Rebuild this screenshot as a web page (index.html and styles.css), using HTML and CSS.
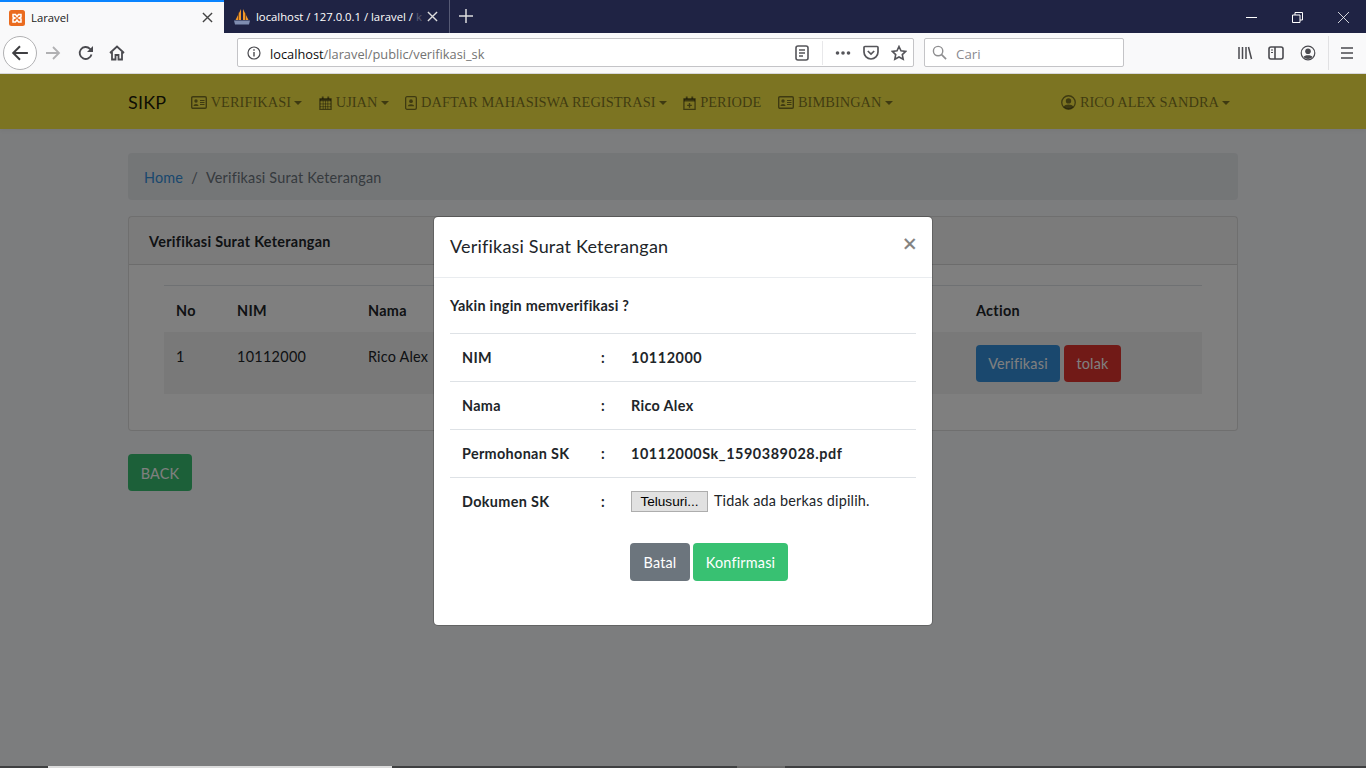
FILE: index.html
```html
<!DOCTYPE html>
<html lang="en">

<head>
    <meta charset="UTF-8">
    <meta name="viewport" content="width=device-width, initial-scale=1.0">
    <title>Laravel</title>
    <link rel="stylesheet" href="styles.css">
</head>

<body>

    <div class="tabbar">
        <div class="tab tab-active">
            <svg class="favicon" viewBox="0 0 16 16"><rect width="16" height="16" rx="2.5" fill="#ea6b1f"/><path d="M4 4.500h2.500L8 6.500l1.500-2H12v2.500l-2 1 2 1V12H9.500L8 10l-1.500 2H4V9l2-1-2-1z" fill="none" stroke="#fff" stroke-width="1.500"/></svg>
            <span class="tab-title">Laravel</span>
            <svg class="tab-close" viewBox="0 0 12 12"><path d="M1 1l10 10M11 1L1 11" stroke="#444" stroke-width="1.500"/></svg>
        </div>
        <div class="tab tab-other">
            <svg class="favicon" viewBox="0 0 16 16"><path d="M7 0L1.500 11H7zM9 0l5.500 11H9z" fill="#f0982a"/><path d="M4.500 3.500V11M11.500 4v7" stroke="#6b3c18" stroke-width=".8"/><path d="M0 11.500h16l-1 4H1z" fill="#7f8db0"/></svg>
            <span class="tab-title">localhost / 127.0.0.1 / laravel / <span class="tab-fade">k</span></span>
            <svg class="tab-close" viewBox="0 0 12 12"><path d="M1 1l10 10M11 1L1 11" stroke="#ddd" stroke-width="1.500"/></svg>
        </div>
        <svg class="new-tab" viewBox="0 0 14 14"><path d="M7 0v14M0 7h14" stroke="#ddd" stroke-width="1.500"/></svg>
        <div class="window-btns">
            <svg viewBox="0 0 11 11"><path d="M0 5.500h11" stroke="#fff"/></svg>
            <svg viewBox="0 0 11 11"><path d="M.5 3h7.500v7.500H.5zM3 3V.5h7.500V8H8" fill="none" stroke="#fff"/></svg>
            <svg viewBox="0 0 11 11"><path d="M0 0l11 11M11 0L0 11" stroke="#fff" stroke-width=".8"/></svg>
        </div>
    </div>

    <div class="toolbar">
        <div class="back-btn">
            <svg viewBox="0 0 16 16"><path d="M15 8H2M8 2L2 8l6 6" fill="none" stroke="#3f3f42" stroke-width="1.800"/></svg>
        </div>
        <svg class="tool-icon forward" viewBox="0 0 16 16"><path d="M1 8h13M8 2l6 6-6 6" fill="none" stroke="#b1b1b3" stroke-width="1.800"/></svg>
        <svg class="tool-icon reload" viewBox="0 0 16 16"><path d="M13.500 9.500A6 6 0 1 1 12 3.800L14 6" fill="none" stroke="#4a4a4f" stroke-width="1.800"/><path d="M15 1v6H9z" fill="#4a4a4f"/></svg>
        <svg class="tool-icon home" viewBox="0 0 16 16"><path d="M1 8l7-6.500L15 8M3 7v7.500h3.500V10h3v4.500H13V7" fill="none" stroke="#4a4a4f" stroke-width="1.800"/></svg>

        <div class="urlbar">
            <svg class="info" viewBox="0 0 14 14"><circle cx="7" cy="7" r="6" fill="none" stroke="#4a4a4f" stroke-width="1.200"/><path d="M7 6v4.500M7 3.200v1.500" stroke="#4a4a4f" stroke-width="1.400"/></svg>
            <span class="url"><span class="url-host">localhost</span>/laravel/public/verifikasi_sk</span>
            <svg class="reader" viewBox="0 0 14 16"><rect x="1" y="1" width="12" height="14" rx="2" fill="none" stroke="#55555a" stroke-width="1.600"/><path d="M4 5h6M4 8h6M4 11h4" stroke="#55555a" stroke-width="1.300"/></svg>
            <span class="url-sep"></span>
            <svg class="dots" viewBox="0 0 16 4"><circle cx="2.500" cy="2" r="1.800" fill="#55555a"/><circle cx="8" cy="2" r="1.800" fill="#55555a"/><circle cx="13.500" cy="2" r="1.800" fill="#55555a"/></svg>
            <svg class="pocket" viewBox="0 0 16 16"><path d="M2 1.500h12a1 1 0 0 1 1 1V7a7 7 0 0 1-14 0V2.500a1 1 0 0 1 1-1z" fill="none" stroke="#55555a" stroke-width="1.700"/><path d="M4.800 6L8 9l3.200-3" fill="none" stroke="#55555a" stroke-width="1.700"/></svg>
            <svg class="star" viewBox="0 0 16 16"><path d="M8 1.500l2 4.300 4.700.6-3.400 3.200.9 4.700L8 12l-4.200 2.300.9-4.700L1.300 6.400 6 5.800z" fill="none" stroke="#55555a" stroke-width="1.600"/></svg>
        </div>

        <div class="searchbar">
            <svg viewBox="0 0 16 16"><circle cx="6.500" cy="6.500" r="5" fill="none" stroke="#8e8e90" stroke-width="1.500"/><path d="M10 10l5 5" stroke="#8e8e90" stroke-width="1.800"/></svg>
            <span class="search-text">Cari</span>
        </div>

        <div class="tool-right">
            <svg class="library" viewBox="0 0 16 16"><path d="M2 2v12M5.500 2v12M9 2v12M11.500 2l3 12" stroke="#4a4a4f" stroke-width="1.500"/></svg>
            <svg class="sidebar" viewBox="0 0 16 16"><rect x="1" y="2" width="14" height="12" rx="2" fill="none" stroke="#4a4a4f" stroke-width="1.600"/><path d="M7 2v12" stroke="#4a4a4f" stroke-width="1.600"/><path d="M3 5h2M3 7.500h2" stroke="#4a4a4f"/></svg>
            <svg class="account" viewBox="0 0 16 16"><circle cx="8" cy="8" r="6.800" fill="none" stroke="#4a4a4f" stroke-width="1.200"/><circle cx="8" cy="6.300" r="2.800" fill="#4a4a4f"/><path d="M3.500 12c1-2.500 8-2.500 9 0-2 2.500-7 2.500-9 0z" fill="#4a4a4f"/></svg>
            <span class="tool-sep"></span>
            <svg class="menu" viewBox="0 0 12 12"><path d="M0 1h12M0 6h12M0 11h12" stroke="#4a4a4f" stroke-width="1.500"/></svg>
        </div>
    </div>

    <div class="page">
        <nav class="navbar">
            <div class="container nav-inner">
                <span class="brand">SIKP</span>
                <a class="nav-link">
                    <svg class="ic ic-card" viewBox="0 0 16 13"><use href="#card"/></svg>VERIFIKASI<i class="caret"></i>
                </a>
                <a class="nav-link">
                    <svg class="ic ic-cal" viewBox="0 0 14 15"><use href="#calendar"/></svg>UJIAN<i class="caret"></i>
                </a>
                <a class="nav-link">
                    <svg class="ic ic-port" viewBox="0 0 13 15"><rect x=".7" y=".7" width="11.600" height="13.600" rx="1.500" fill="none" stroke="currentColor" stroke-width="1.400"/><circle cx="6.500" cy="5.500" r="2" fill="currentColor"/><path d="M3 11c0-3 7-3 7 0z" fill="currentColor"/></svg>DAFTAR MAHASISWA REGISTRASI<i class="caret"></i>
                </a>
                <a class="nav-link">
                    <svg class="ic ic-cal" viewBox="0 0 14 15"><path d="M1 3h12v11.300H1z" fill="none" stroke="currentColor" stroke-width="1.400"/><path d="M1 3h12v3H1zM3 .5h2V3H3zM9 .5h2V3H9z" fill="currentColor"/><path d="M7 7.500v5M4.500 10h5" stroke="currentColor" stroke-width="1.500"/></svg>PERIODE
                </a>
                <a class="nav-link">
                    <svg class="ic ic-card" viewBox="0 0 16 13"><use href="#card"/></svg>BIMBINGAN<i class="caret"></i>
                </a>
                <a class="nav-link nav-user">
                    <svg class="ic ic-user" viewBox="0 0 14 14"><circle cx="7" cy="7" r="6.300" fill="none" stroke="currentColor" stroke-width="1.200"/><circle cx="7" cy="5.500" r="2.500" fill="currentColor"/><path d="M2.500 11c1-3 8-3 9 0-2 2.800-7 2.800-9 0z" fill="currentColor"/></svg>RICO ALEX SANDRA<i class="caret"></i>
                </a>
            </div>
        </nav>

        <main class="container content">
            <div class="breadcrumb">
                <a class="crumb-link">Home</a>
                <span class="crumb-sep">/</span>
                <span class="crumb-now">Verifikasi Surat Keterangan</span>
            </div>

            <div class="card">
                <div class="card-header">Verifikasi Surat Keterangan</div>
                <div class="card-body">
                    <table class="list-table">
                        <thead>
                            <tr>
                                <th class="col-no">No</th>
                                <th class="col-nim">NIM</th>
                                <th class="col-nama">Nama</th>
                                <th>Action</th>
                            </tr>
                        </thead>
                        <tbody>
                            <tr>
                                <td>1</td>
                                <td class="num">10112000</td>
                                <td>Rico Alex</td>
                                <td class="col-action">
                                    <button class="btn btn-blue">Verifikasi</button>
                                    <button class="btn btn-red">tolak</button>
                                </td>
                            </tr>
                        </tbody>
                    </table>
                </div>
            </div>

            <button class="btn btn-back">BACK</button>
        </main>

        <div class="backdrop">
            <div class="modal">
                <div class="modal-header">
                    <h5 class="modal-title">Verifikasi Surat Keterangan</h5>
                    <span class="modal-close">&times;</span>
                </div>
                <div class="modal-body">
                    <p class="modal-question">Yakin ingin memverifikasi ?</p>
                    <table class="detail-table">
                        <tr>
                            <th class="detail-label">NIM</th>
                            <th class="detail-colon">:</th>
                            <th class="detail-num">10112000</th>
                        </tr>
                        <tr>
                            <th class="detail-label">Nama</th>
                            <th class="detail-colon">:</th>
                            <th>Rico Alex</th>
                        </tr>
                        <tr>
                            <th class="detail-label">Permohonan SK</th>
                            <th class="detail-colon">:</th>
                            <th class="detail-num">10112000Sk_1590389028.pdf</th>
                        </tr>
                        <tr>
                            <th class="detail-label">Dokumen SK</th>
                            <th class="detail-colon">:</th>
                            <td class="file-cell">
                                <span class="file-btn">Telusuri...</span>
                                <span class="file-name">Tidak ada berkas dipilih.</span>
                            </td>
                        </tr>
                    </table>
                    <div class="modal-actions">
                        <button class="btn btn-grey">Batal</button>
                        <button class="btn btn-green">Konfirmasi</button>
                    </div>
                </div>
            </div>
        </div>
    </div>

    <div class="bottom-strip">
        <span class="strip-light"></span>
        <span class="strip-mid"></span>
    </div>

    <svg class="defs" width="0" height="0">
        <symbol id="card" viewBox="0 0 16 13">
            <rect x=".7" y=".7" width="14.600" height="11.600" rx="1.200" fill="none" stroke="currentColor" stroke-width="1.400"/>
            <circle cx="5" cy="5" r="1.700" fill="currentColor"/>
            <path d="M2.500 10c0-2.800 5-2.800 5 0z" fill="currentColor"/>
            <path d="M9 4.500h4.500M9 6.500h4.500M9 8.500h4.500" stroke="currentColor"/>
        </symbol>
        <symbol id="calendar" viewBox="0 0 14 15">
            <path d="M1 3h12v11.300H1z" fill="none" stroke="currentColor" stroke-width="1.400"/>
            <path d="M1 3h12v2.500H1zM3 .5h2V3H3zM9 .5h2V3H9z" fill="currentColor"/>
            <path d="M1 8.500h12M1 11.500h12M4.500 5v9M7 5v9M9.500 5v9" stroke="currentColor" stroke-width=".8"/>
        </symbol>
    </svg>

</body>

</html>
```

FILE: styles.css
```css
* {
    box-sizing: border-box;
}

body {
    margin: 0;
    height: 768px;
    overflow: hidden;
    display: flex;
    flex-direction: column;
    background: #f8fafc;
    font-family: Lato, "Open Sans", sans-serif;
    font-size: 14.4px;
    color: #212529;
}

/* browser chrome */
.tabbar {
    height: 33px;
    flex: none;
    display: flex;
    background: #1f2344;
    font-family: "Open Sans", sans-serif;
    font-size: 11.3px;
}

.tab {
    display: flex;
    align-items: center;
    width: 224px;
    padding-left: 9px;
    padding-right: 11px;
}

.tab-active {
    background: #f9f9fa;
    border-top: 2px solid #0a84ff;
    color: #18191a;
}

.tab-other {
    width: 226px;
    padding-left: 10px;
    padding-right: 11px;
    color: #fff;
    border-right: 1px solid #565a75;
}

.favicon {
    width: 16px;
    height: 16px;
    flex: none;
}

.tab-title {
    margin-left: 6px;
    flex: 1;
    white-space: nowrap;
}

.tab-fade {
    opacity: .25;
}

.tab-close {
    width: 11px;
    height: 11px;
    flex: none;
}

.new-tab {
    width: 14px;
    height: 14px;
    margin: 9px 0 0 9px;
}

.window-btns {
    margin-left: auto;
    display: flex;
    gap: 35px;
    padding: 12px 17px 0 0;
}

.window-btns svg {
    width: 11px;
    height: 11px;
}

.toolbar {
    height: 41px;
    flex: none;
    display: flex;
    align-items: center;
    background: #f9f9fa;
    border-bottom: 1px solid #d7d7db;
    padding: 0 0 1px 3px;
}

.back-btn {
    width: 34px;
    height: 34px;
    flex: none;
    border-radius: 50%;
    border: 1px solid #b1b1b3;
    background: #fff;
    display: flex;
    align-items: center;
    justify-content: center;
}

.back-btn svg {
    width: 18px;
    height: 18px;
}

.tool-icon {
    width: 16px;
    height: 16px;
    flex: none;
}

.forward {
    margin-left: 8px;
}

.reload {
    margin-left: 17px;
}

.home {
    margin-left: 15px;
}

.urlbar {
    width: 677px;
    height: 29px;
    flex: none;
    margin-left: 112px;
    display: flex;
    align-items: center;
    background: #fff;
    border: 1px solid #c4c4c7;
    border-radius: 2px;
    padding: 0 6px 0 9px;
    font-family: "Open Sans", sans-serif;
    font-size: 12.8px;
    color: #737373;
}

.info {
    width: 14px;
    height: 14px;
    flex: none;
}

.url {
    margin-left: 9px;
    padding-top: 2px;
    flex: 1;
}

.url-host {
    color: #0c0c0d;
}

.reader {
    width: 14px;
    height: 16px;
}

.url-sep {
    width: 1px;
    height: 24px;
    background: #e8e8ea;
    margin: 0 12px 0 13px;
}

.dots {
    width: 16px;
    height: 4px;
}

.pocket {
    width: 16px;
    height: 16px;
    margin-left: 12px;
}

.star {
    width: 16px;
    height: 16px;
    margin-left: 12px;
}

.searchbar {
    width: 200px;
    height: 29px;
    flex: none;
    margin-left: 10px;
    display: flex;
    align-items: center;
    gap: 9px;
    background: #fff;
    border: 1px solid #c4c4c7;
    border-radius: 2px;
    padding-left: 7px;
    font-family: "Open Sans", sans-serif;
    font-size: 13.3px;
    color: #8a8a90;
}

.searchbar svg {
    width: 15px;
    height: 15px;
}

.search-text {
    padding-top: 2px;
}

.tool-right {
    flex: 1;
    display: flex;
    align-items: center;
    justify-content: flex-end;
    padding-right: 13px;
}

.tool-right svg {
    width: 16px;
    height: 16px;
    flex: none;
}

.sidebar {
    margin-left: 15px;
}

.account {
    margin-left: 16px;
}

.tool-sep {
    width: 1px;
    height: 34px;
    background: #e1e1e3;
    margin: 0 12px;
}

.tool-right .menu {
    width: 12px;
    height: 12px;
}

/* page */
.page {
    flex: 1;
    position: relative;
    overflow: hidden;
    letter-spacing: .2px;
}

.container {
    width: 1110px;
    margin: 0 auto;
}

.navbar {
    height: 55px;
    background: #f9e844;
    box-shadow: 0 2px 4px rgba(0, 0, 0, .04);
}

.nav-inner {
    height: 100%;
    padding-top: 2px;
    display: flex;
    align-items: center;
    font-family: "Liberation Serif", serif;
    letter-spacing: .05px;
    color: rgba(0, 0, 0, .5);
}

.brand {
    font-family: Lato, sans-serif;
    font-size: 18px;
    letter-spacing: .2px;
    color: rgba(0, 0, 0, .9);
    margin: 0 16px 2px 0;
}

.nav-link {
    display: flex;
    align-items: center;
    padding: 0 8.300px;
    white-space: nowrap;
}

.nav-user {
    margin-left: auto;
    padding-right: 8px;
}

.ic {
    flex: none;
    margin-right: 4px;
}

.ic-card {
    width: 16px;
    height: 13px;
}

.ic-cal {
    width: 13px;
    height: 14px;
}

.ic-port {
    width: 12px;
    height: 14px;
}

.ic-user {
    width: 15px;
    height: 15px;
}

.caret {
    width: 0;
    height: 0;
    margin-left: 3px;
    border-top: 4.300px solid currentColor;
    border-left: 4.300px solid transparent;
    border-right: 4.300px solid transparent;
}

.content {
    padding-top: 24px;
}

.breadcrumb {
    height: 47px;
    display: flex;
    align-items: center;
    padding: 1px 16px 0;
    background: #e9ecef;
    border-radius: 4px;
    margin-bottom: 16px;
}

.crumb-link {
    color: #3490dc;
}

.crumb-sep {
    color: #6c757d;
    margin: 0 8px;
}

.crumb-now {
    color: #6c757d;
}

.card {
    height: 215px;
    background: #fff;
    border: 1px solid rgba(0, 0, 0, .125);
    border-radius: 4px;
    margin-bottom: 23px;
}

.card-header {
    height: 48px;
    display: flex;
    align-items: center;
    padding: 1px 20px 0;
    font-weight: 700;
    letter-spacing: .3px;
    background: rgba(0, 0, 0, .03);
    border-bottom: 1px solid rgba(0, 0, 0, .125);
}

.card-body {
    padding: 20px 35px;
}

.list-table {
    width: 1038px;
    border-collapse: collapse;
    table-layout: fixed;
}

.list-table th,
.list-table td {
    text-align: left;
    padding: 16px 12px 0;
    vertical-align: top;
}

.list-table th {
    height: 46px;
    padding-top: 3px;
    padding-bottom: 0;
    border-top: 1px solid #dee2e6;
    vertical-align: middle;
    letter-spacing: .3px;
}

.list-table td {
    height: 62px;
    background: rgba(0, 0, 0, .05);
}

.list-table .num {
    letter-spacing: .3px;
}

.col-no {
    width: 61px;
}

.col-nim {
    width: 131px;
}

.col-nama {
    width: 608px;
}

.list-table .col-action {
    display: flex;
    gap: 4px;
    padding-top: 13px;
}

.btn {
    height: 37px;
    border: 1px solid transparent;
    border-radius: 4px;
    padding: 1px 0 0;
    font-family: inherit;
    font-size: 14.4px;
    letter-spacing: .2px;
    color: #fff;
}

.btn-blue {
    width: 84px;
    background: #3490dc;
}

.btn-red {
    width: 57px;
    background: #e3342f;
}

.btn-back {
    width: 64px;
    background: #38c172;
}

.btn-grey {
    height: 38px;
    width: 60px;
    background: #6c757d;
}

.btn-green {
    height: 38px;
    width: 95px;
    background: #38c172;
}

/* modal */
.backdrop {
    position: absolute;
    inset: 0;
    background: rgba(0, 0, 0, .5);
    padding-top: 142px;
}

.modal {
    width: 500px;
    height: 410px;
    margin: 0 auto;
    background: #fff;
    border: 1px solid rgba(0, 0, 0, .2);
    border-radius: 5px;
    background-clip: padding-box;
}

.modal-header {
    height: 61px;
    display: flex;
    justify-content: space-between;
    padding: 0 16px;
    border-bottom: 1px solid #e9ecef;
}

.modal-title {
    margin: 0;
    font-size: 18px;
    font-weight: 400;
    letter-spacing: .2px;
    line-height: 59px;
}

.modal-close {
    margin-right: -1px;
    font-family: "Liberation Sans", sans-serif;
    font-size: 24px;
    line-height: 54px;
    color: #808080;
    -webkit-text-stroke: .3px #808080;
}

.modal-body {
    padding: 16px;
}

.modal-question {
    margin: 0 0 15px;
    font-weight: 700;
    letter-spacing: .26px;
    line-height: 24px;
}

.detail-table {
    width: 466px;
    border-collapse: collapse;
    table-layout: fixed;
}

.detail-table th,
.detail-table td {
    height: 48px;
    padding: 0 12px;
    text-align: left;
    letter-spacing: .33px;
    border-top: 1px solid #dee2e6;
}

.detail-label {
    width: 139px;
}

.detail-colon {
    width: 30px;
}

.detail-table .detail-num {
    letter-spacing: .56px;
}

.detail-table .file-cell {
    white-space: nowrap;
    letter-spacing: .2px;
}

.file-btn {
    display: inline-block;
    width: 77px;
    height: 21px;
    line-height: 19px;
    text-align: center;
    background: #e1e1e1;
    border: 1px solid #adadad;
    font-family: "Liberation Sans", sans-serif;
    font-size: 13.600px;
    letter-spacing: 0;
    color: #000;
}

.file-name {
    margin-left: 2px;
}

.modal-actions {
    display: flex;
    gap: 3px;
    margin-top: 17px;
    padding-left: 180px;
}

.bottom-strip {
    height: 2px;
    flex: none;
    background: #3f4041;
    display: flex;
}

.strip-light {
    width: 344px;
    margin-left: 48px;
    background: #dcdcdc;
}

.strip-mid {
    width: 48px;
    margin-left: 345px;
    background: #6b6b6b;
}

.defs {
    position: absolute;
}
```
